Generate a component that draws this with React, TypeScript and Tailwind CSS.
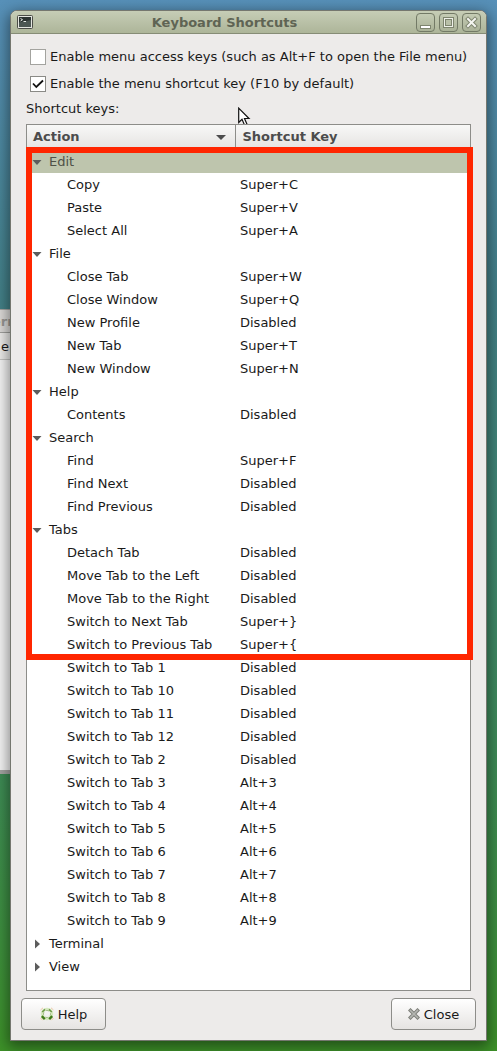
import React from "react";

interface Shortcut {
  action: string;
  keys: string;
}

interface Group {
  name: string;
  open: boolean;
  selected?: boolean;
  items: Shortcut[];
}

const groups: Group[] = [
  {
    name: "Edit",
    open: true,
    selected: true,
    items: [
      { action: "Copy", keys: "Super+C" },
      { action: "Paste", keys: "Super+V" },
      { action: "Select All", keys: "Super+A" },
    ],
  },
  {
    name: "File",
    open: true,
    items: [
      { action: "Close Tab", keys: "Super+W" },
      { action: "Close Window", keys: "Super+Q" },
      { action: "New Profile", keys: "Disabled" },
      { action: "New Tab", keys: "Super+T" },
      { action: "New Window", keys: "Super+N" },
    ],
  },
  {
    name: "Help",
    open: true,
    items: [{ action: "Contents", keys: "Disabled" }],
  },
  {
    name: "Search",
    open: true,
    items: [
      { action: "Find", keys: "Super+F" },
      { action: "Find Next", keys: "Disabled" },
      { action: "Find Previous", keys: "Disabled" },
    ],
  },
  {
    name: "Tabs",
    open: true,
    items: [
      { action: "Detach Tab", keys: "Disabled" },
      { action: "Move Tab to the Left", keys: "Disabled" },
      { action: "Move Tab to the Right", keys: "Disabled" },
      { action: "Switch to Next Tab", keys: "Super+}" },
      { action: "Switch to Previous Tab", keys: "Super+{" },
      { action: "Switch to Tab 1", keys: "Disabled" },
      { action: "Switch to Tab 10", keys: "Disabled" },
      { action: "Switch to Tab 11", keys: "Disabled" },
      { action: "Switch to Tab 12", keys: "Disabled" },
      { action: "Switch to Tab 2", keys: "Disabled" },
      { action: "Switch to Tab 3", keys: "Alt+3" },
      { action: "Switch to Tab 4", keys: "Alt+4" },
      { action: "Switch to Tab 5", keys: "Alt+5" },
      { action: "Switch to Tab 6", keys: "Alt+6" },
      { action: "Switch to Tab 7", keys: "Alt+7" },
      { action: "Switch to Tab 8", keys: "Alt+8" },
      { action: "Switch to Tab 9", keys: "Alt+9" },
    ],
  },
  { name: "Terminal", open: false, items: [] },
  { name: "View", open: false, items: [] },
];

const TerminalIcon = () => (
  <svg width="16" height="14" viewBox="0 0 16 14" aria-hidden="true">
    <rect x="0.5" y="0.5" width="15" height="13" rx="1" fill="#e4e6e0" stroke="#4b4d47" />
    <rect x="2" y="2" width="12" height="10" fill="#2c3432" />
    <path d="M2 7.5 L14 5 V12 H2 Z" fill="#4c5753" />
    <path d="M3.5 3.5 L5.5 4.7 L3.5 6 M6.5 6.5 H9" fill="none" stroke="#e8ece8" />
  </svg>
);

const HelpIcon = () => (
  <svg width="14" height="14" viewBox="0 0 14 14" aria-hidden="true">
    <circle cx="7" cy="7" r="4.7" fill="none" stroke="#d5e8bf" strokeWidth="3" />
    <circle cx="7" cy="7" r="3.5" fill="none" stroke="#8fae6f" strokeWidth="0.8" strokeDasharray="3 2.5" strokeDashoffset="1.5" />
    <path d="M1.8 9.2 L4.8 12.2 M9.2 12.2 L12.2 9.2" stroke="#3f7a18" strokeWidth="2.4" />
    <path d="M2.2 5 L5 2.4 M9 2.4 L11.8 5" stroke="#6f9a4a" strokeWidth="1.6" />
    <path d="M0.5 3 L3 0.8 M11 0.8 L13.5 3 M0.5 11 L2.5 13.2 M11.5 13.2 L13.5 11" stroke="#ecc9a4" strokeWidth="1" />
  </svg>
);

const CloseIcon = () => (
  <svg width="12" height="12" viewBox="0 0 12 12" aria-hidden="true">
    <path d="M2.5 2.5 L9.5 9.5 M9.5 2.5 L2.5 9.5" stroke="#7d7f79" strokeWidth="3.6" strokeLinecap="square" />
    <path d="M2.5 2.5 L9.5 9.5 M9.5 2.5 L2.5 9.5" stroke="#b4b6b1" strokeWidth="1.6" strokeLinecap="square" />
  </svg>
);

const Pointer = () => (
  <svg className="absolute left-[227px] top-[73px]" width="13" height="20" viewBox="0 0 13 20" aria-hidden="true">
    <path
      d="M0.7 1.2 V15.5 L4 12.3 L6.6 18.3 L9 17.2 L6.5 11.5 H11 Z"
      fill="#fff"
      stroke="#111"
      strokeWidth="1.2"
    />
  </svg>
);

interface WindowButtonProps {
  label: string;
  children: React.ReactNode;
}

const WindowButton: React.FC<WindowButtonProps> = ({ label, children }) => (
  <button
    type="button"
    aria-label={label}
    className="flex h-[19px] w-[19px] items-center justify-center rounded-[4px] border border-[#737a66] bg-linear-to-b from-[#c4cbb4] to-[#aab297]"
  >
    <svg width="17" height="17" viewBox="0 0 17 17" aria-hidden="true">
      {children}
    </svg>
  </button>
);

interface OptionProps {
  id: string;
  label: string;
  checked: boolean;
}

const Option: React.FC<OptionProps> = ({ id, label, checked }) => (
  <div className="flex h-[27px] items-center gap-1 pl-1">
    <span className="grid">
      <input
        id={id}
        type="checkbox"
        defaultChecked={checked}
        className="peer col-start-1 row-start-1 h-4 w-4 appearance-none border border-[#a3a39f] bg-white checked:border-[#8a8a86]"
      />
      <svg
        className="pointer-events-none invisible col-start-1 row-start-1 peer-checked:visible"
        width="16"
        height="16"
        viewBox="0 0 16 16"
        aria-hidden="true"
      >
        <path d="M3 7.5 L6.3 11 L13 4.5" fill="none" stroke="#111" strokeWidth="1.8" />
      </svg>
    </span>
    <label htmlFor={id} className="whitespace-nowrap">
      {label}
    </label>
  </div>
);

const GroupRows: React.FC<{ group: Group }> = ({ group }) => (
  <>
    <tr className={group.selected ? "h-[23px] bg-[#bec5ad] text-[#4e5148]" : "h-[23px]"}>
      <td colSpan={2} className="p-0">
        <div className="flex items-center gap-1.5 pl-1">
          <svg width="12" height="12" viewBox="0 0 12 12" fill="#5c5c5c" aria-hidden="true">
            {group.open ? <path d="M1.5 4 H10.5 L6 9 Z" /> : <path d="M4 1.5 V10.5 L9 6 Z" />}
          </svg>
          {group.name}
        </div>
      </td>
    </tr>
    {group.items.map((item) => (
      <tr key={item.action} className="h-[23px]">
        <td className="p-0 pl-10">{item.action}</td>
        <td className="p-0 pl-[5px]">{item.keys}</td>
      </tr>
    ))}
  </>
);

export default function App() {
  return (
    <div className="relative min-h-screen overflow-hidden bg-linear-to-b from-[#5790b8] from-0% via-[#438088] via-28% to-[#3d9128] to-100% px-2.5 pt-2.5 pb-2.5 font-['DejaVu_Sans',sans-serif] text-[13px] leading-[23px] text-[#1a1a1a]">
      {/* terminal window peeking out behind the dialog */}
      <div className="absolute top-[309px] left-0 h-[465px] w-3 overflow-hidden border-t border-b-4 border-[#a5a5a3] bg-[#f4f4f4]">
        <div className="h-[23px] border-b border-[#a0a09d] bg-[#dcdad8] font-bold text-[#9a9894]">
          <span className="-ml-2">ern</span>
        </div>
        <div className="h-[27px] border-b border-[#c4c4c2] bg-[#ecebe9] pl-px leading-7">e</div>
      </div>

      <main className="relative rounded-t-[7px] border border-[#75776f] bg-[#edebea] shadow-[0_4px_14px_2px_rgba(0,0,0,0.45)]">
        <header className="flex h-[23px] items-center rounded-t-[6px] border-b border-[#868c76] bg-linear-to-b from-[#c6cdb6] to-[#adb599] pr-[5px] pl-1.5">
          <TerminalIcon />
          <h1 className="flex-1 text-center font-bold text-[#5f6454]">Keyboard Shortcuts</h1>
          <div className="flex gap-1">
            <WindowButton label="Minimize">
              <rect x="3.5" y="11.5" width="10" height="3" fill="#fff" stroke="#7e856f" />
            </WindowButton>
            <WindowButton label="Maximize">
              <rect x="3.5" y="3.5" width="10" height="10" fill="#eef0e8" stroke="#7e856f" />
              <rect x="5.5" y="5.5" width="6" height="6" fill="#b9c0a8" stroke="#7e856f" />
            </WindowButton>
            <WindowButton label="Close">
              <path d="M5 5 L12 12 M12 5 L5 12" stroke="#7e856f" strokeWidth="4" strokeLinecap="square" />
              <path d="M5 5 L12 12 M12 5 L5 12" stroke="#f4f5f0" strokeWidth="2" strokeLinecap="square" />
            </WindowButton>
          </div>
        </header>

        <div className="relative px-[15px] pt-[9px]">
          <Option id="access-keys" label="Enable menu access keys (such as Alt+F to open the File menu)" checked={false} />
          <Option id="menu-key" label="Enable the menu shortcut key (F10 by default)" checked />
          <h2 id="list-title" className="h-[27px]">Shortcut keys:</h2>
          <Pointer />

          <div className="relative border border-[#8d8d89] bg-white pb-3">
            <table className="w-full table-fixed border-collapse text-left" aria-labelledby="list-title">
              <thead>
                <tr className="h-[25px] bg-linear-to-b from-[#f8f8f7] to-[#e4e2e0] text-[#4c4c4c]">
                  <th className="w-[208px] border-r border-[#8d8d89] p-0 pr-2 pb-0.5 pl-1.5">
                    <div className="flex items-center justify-between">
                      Action
                      <svg width="12" height="12" viewBox="0 0 12 12" fill="#4c4c4c" aria-hidden="true">
                        <path d="M1 4 H11 L6 9 Z" />
                      </svg>
                    </div>
                  </th>
                  <th className="p-0 pb-0.5 pl-[7px]">Shortcut Key</th>
                </tr>
              </thead>
              <tbody>
                {groups.map((group) => (
                  <GroupRows key={group.name} group={group} />
                ))}
              </tbody>
            </table>
            {/* red marker round the shortcuts that were changed */}
            <div className="pointer-events-none absolute top-[22px] -right-[3px] -left-px h-[513px] border-6 border-[#ff2600]" />
          </div>
        </div>

        <footer className="flex justify-between px-2.5 pt-[7px] pb-2.5">
          <button
            type="button"
            className="flex h-8 w-[85px] items-center justify-center gap-1 rounded-[4px] border border-[#8d8d89] bg-linear-to-b from-white to-[#e6e4e2]"
          >
            <HelpIcon />
            Help
          </button>
          <button
            type="button"
            className="flex h-8 w-[85px] items-center justify-center gap-1 rounded-[4px] border border-[#8d8d89] bg-linear-to-b from-white to-[#e6e4e2]"
          >
            <CloseIcon />
            Close
          </button>
        </footer>
      </main>
    </div>
  );
}
